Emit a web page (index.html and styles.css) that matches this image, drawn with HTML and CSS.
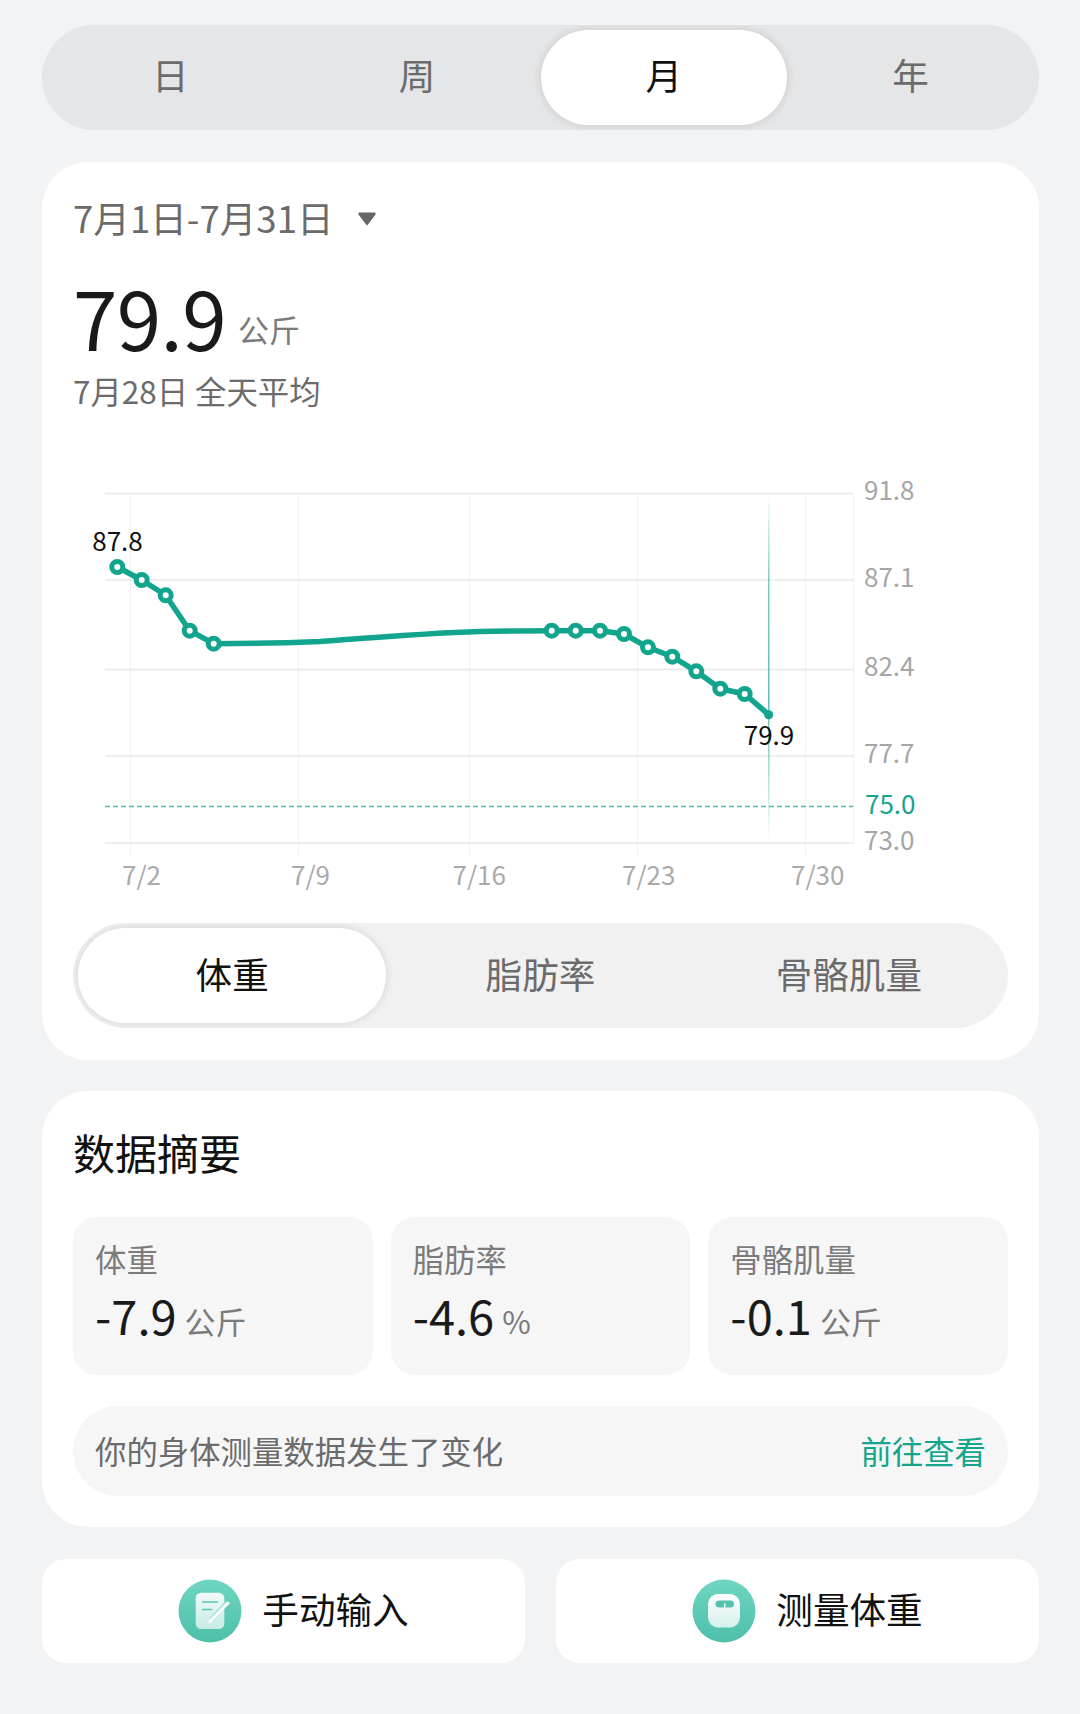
FILE: index.html
```html
<!DOCTYPE html>
<html lang="zh-CN">
<head>
<meta charset="utf-8">
<title>体重</title>
<link rel="stylesheet" href="styles.css">
</head>
<body>
<main class="page">
  <nav class="seg seg-top">
    <div class="tab">日</div>
    <div class="tab">周</div>
    <div class="tab active">月</div>
    <div class="tab">年</div>
  </nav>

  <section class="card card-chart">
    <div class="date-row">
      <span>7月1日-7月31日</span>
      <svg class="caret" viewBox="0 0 20 15" aria-hidden="true"><path d="M2.5 1.5h15a1.2 1.2 0 0 1 1 1.9l-7.500 10a1.200 1.200 0 0 1-2 0l-7.500-10a1.200 1.200 0 0 1 1-1.900z"/></svg>
    </div>
    <div class="reading">
      <span class="reading-value">79.9</span>
      <span class="reading-unit">公斤</span>
    </div>
    <div class="reading-sub">7月28日 全天平均</div>

    <svg class="chart" viewBox="73 470 935 435" aria-label="体重趋势图">
      <defs>
        <linearGradient id="hl" x1="0" y1="0" x2="0" y2="1">
          <stop offset="0" stop-color="#14a58c" stop-opacity="0"/>
          <stop offset=".25" stop-color="#14a58c" stop-opacity=".55"/>
          <stop offset=".6" stop-color="#14a58c" stop-opacity=".7"/>
          <stop offset="1" stop-color="#14a58c" stop-opacity="0"/>
        </linearGradient>
      </defs>
      <g class="grid-v">
        <line x1="130.500" y1="493" x2="130.500" y2="855"/>
        <line x1="298.500" y1="493" x2="298.500" y2="855"/>
        <line x1="469.500" y1="493" x2="469.500" y2="855"/>
        <line x1="637.500" y1="493" x2="637.500" y2="855"/>
        <line x1="805.500" y1="493" x2="805.500" y2="855"/>
        <line x1="853.500" y1="493" x2="853.500" y2="843"/>
      </g>
      <g class="grid-h">
        <line x1="105" y1="493.500" x2="854" y2="493.500"/>
        <line x1="105" y1="580" x2="854" y2="580"/>
        <line x1="105" y1="669.500" x2="854" y2="669.500"/>
        <line x1="105" y1="756" x2="854" y2="756"/>
        <line x1="105" y1="843" x2="854" y2="843"/>
      </g>
      <line class="target" x1="105" y1="806.500" x2="853" y2="806.500"/>
      <rect class="highlight" x="768" y="493" width="1.500" height="350" fill="url(#hl)"/>
      <path class="trend" d="M117.300 567L141.700 580L165.700 595.300L189.700 630.700L213.700 643.700C250 643.700 270 643.500 320 641.500C380 637 430 633 480 631.500C510 630.700 530 630.700 551.700 630.700L575.700 630.700L600 630.700L624 634L648 647.300L672.300 656.700L696.300 671.300L720.300 688.700L744.700 694L768.700 714.700"/>
      <g class="dots">
        <circle cx="117.300" cy="567" r="5.500"/>
        <circle cx="141.700" cy="580" r="5.500"/>
        <circle cx="165.700" cy="595.300" r="5.500"/>
        <circle cx="189.700" cy="630.700" r="5.500"/>
        <circle cx="213.700" cy="643.700" r="5.500"/>
        <circle cx="551.700" cy="630.700" r="5.500"/>
        <circle cx="575.700" cy="630.700" r="5.500"/>
        <circle cx="600" cy="630.700" r="5.500"/>
        <circle cx="624" cy="634" r="5.500"/>
        <circle cx="648" cy="647.300" r="5.500"/>
        <circle cx="672.300" cy="656.700" r="5.500"/>
        <circle cx="696.300" cy="671.300" r="5.500"/>
        <circle cx="720.300" cy="688.700" r="5.500"/>
        <circle cx="744.700" cy="694" r="5.500"/>
      </g>
      <circle class="dot-end" cx="768.700" cy="714.700" r="4.500"/>
      <text class="peak" x="117.500" y="550.500">87.8</text>
      <text class="peak" x="769" y="745">79.9</text>
      <g class="axis-y">
        <text x="864" y="500">91.8</text>
        <text x="864" y="587">87.1</text>
        <text x="864" y="676">82.4</text>
        <text x="864" y="763">77.7</text>
        <text class="axis-target" x="865" y="814">75.0</text>
        <text x="864" y="850">73.0</text>
      </g>
      <g class="axis-x">
        <text x="122" y="885">7/2</text>
        <text x="291" y="885">7/9</text>
        <text x="452.500" y="885">7/16</text>
        <text x="622" y="885">7/23</text>
        <text x="791" y="885">7/30</text>
      </g>
    </svg>

    <nav class="seg seg-metric">
      <div class="tab active">体重</div>
      <div class="tab">脂肪率</div>
      <div class="tab">骨骼肌量</div>
    </nav>
  </section>

  <section class="card card-summary">
    <h2 class="summary-title">数据摘要</h2>
    <div class="tiles">
      <div class="tile">
        <div class="tile-label">体重</div>
        <div class="tile-row"><span class="tile-value">-7.9</span><span class="tile-unit">公斤</span></div>
      </div>
      <div class="tile">
        <div class="tile-label">脂肪率</div>
        <div class="tile-row"><span class="tile-value">-4.6</span><span class="tile-unit">%</span></div>
      </div>
      <div class="tile">
        <div class="tile-label">骨骼肌量</div>
        <div class="tile-row"><span class="tile-value">-0.1</span><span class="tile-unit">公斤</span></div>
      </div>
    </div>
    <div class="notice">
      <span>你的身体测量数据发生了变化</span>
      <span class="notice-link">前往查看</span>
    </div>
  </section>

  <div class="actions">
    <div class="action">
      <svg class="action-icon" viewBox="0 0 64 64" aria-hidden="true">
        <defs>
          <linearGradient id="disc" x1="0" y1="0" x2="0" y2="1">
            <stop offset="0" stop-color="#6fd6c1"/>
            <stop offset="1" stop-color="#4dbfa9"/>
          </linearGradient>
          <linearGradient id="sheet" x1="0" y1="0" x2="0" y2="1">
            <stop offset="0" stop-color="#f2faf8"/>
            <stop offset="1" stop-color="#c6ebe3"/>
          </linearGradient>
          <linearGradient id="body" x1="0" y1="0" x2="0" y2="1">
            <stop offset="0" stop-color="#ffffff"/>
            <stop offset="1" stop-color="#d4f0ea"/>
          </linearGradient>
        </defs>
        <circle cx="32" cy="32" r="31.500" fill="url(#disc)"/>
        <rect x="17.700" y="13.700" width="28.600" height="36.300" rx="5.500" fill="url(#sheet)"/>
        <path d="M24 23h16M24 30.500h10" stroke="#5cc5b0" stroke-width="1.500" fill="none"/>
        <path d="M49 23.500L33 41" stroke="#a5e0d3" stroke-width="4.500" fill="none"/>
        <path d="M50 24L32 42.500" stroke="#ffffff" stroke-width="3" stroke-linecap="round" fill="none"/>
      </svg>
      <span>手动输入</span>
    </div>
    <div class="action">
      <svg class="action-icon" viewBox="0 0 64 64" aria-hidden="true">
        <circle cx="32" cy="32" r="31.500" fill="url(#disc)"/>
        <rect x="16" y="15" width="32" height="33.500" rx="10" fill="url(#body)"/>
        <rect x="23.500" y="21.500" width="18.500" height="7" rx="3.500" fill="#54c3ad"/>
        <rect x="32" y="24.500" width="1.500" height="5" fill="#ffffff"/>
      </svg>
      <span>测量体重</span>
    </div>
  </div>
</main>
</body>
</html>
```

FILE: styles.css
```css
* { box-sizing: border-box; }

html, body { margin: 0; padding: 0; }

body {
  background: #f1f3f5;
  font-family: "Noto Sans CJK SC", "Noto Sans", sans-serif;
  color: #111;
}

.page {
  width: 1080px;
  height: 1714px;
  padding: 25px 41px 0 42px;
  display: flex;
  flex-direction: column;
  overflow: hidden;
}

.seg {
  display: flex;
  height: 105px;
  padding: 5px;
  border-radius: 53px;
  overflow: hidden;
}

.seg-top { background: #e5e6e8; }

.seg-metric { background: #f1f1f2; flex: none; }

.tab {
  flex: 1 1 0;
  display: flex;
  align-items: center;
  justify-content: center;
  font-size: 36.600px;
  line-height: 44px;
  padding-bottom: 6px;
  color: #6b6b6b;
  border-radius: 48px;
}

.seg-metric .tab { padding-bottom: 4px; }

.tab.active {
  background: #fff;
  color: #111;
  box-shadow: 0 0 10px rgba(0, 0, 0, .13);
}

.card {
  background: #fff;
  border-radius: 46px;
  padding-left: 31px;
  padding-right: 31px;
}

.card-chart {
  margin-top: 32px;
  height: 898px;
  padding-top: 34px;
}

.date-row {
  display: flex;
  align-items: center;
  height: 44px;
  font-size: 36.600px;
  line-height: 44px;
  color: #6b6b6b;
}

.caret {
  width: 20px;
  height: 15px;
  margin-left: 23px;
  fill: #666;
}

.reading {
  display: flex;
  align-items: flex-end;
  margin-top: 36px;
  height: 80px;
}

.reading-value {
  font-size: 80px;
  line-height: 80px;
  letter-spacing: -.6px;
  color: #1a1a1a;
}

.reading-unit {
  font-size: 31px;
  line-height: 30px;
  color: #7b7b7b;
  margin: 0 0 12px 12px;
}

.reading-sub {
  margin-top: 13px;
  font-size: 31.400px;
  line-height: 44px;
  color: #6b6b6b;
}

.chart {
  display: block;
  width: 935px;
  height: 435px;
  margin-top: 57px;
  margin-bottom: 18px;
}

.chart text { font-size: 26px; }

.grid-v line { stroke: #ececec; stroke-width: 1; stroke-dasharray: 2 1; }

.grid-h line { stroke: #e8e8e8; stroke-width: 1.500; }

.target {
  stroke: #4dbba7;
  stroke-width: 1.500;
  stroke-dasharray: 5 3;
}

.trend {
  fill: none;
  stroke: #12a58e;
  stroke-width: 5.500;
  stroke-linejoin: round;
}

.dots circle {
  fill: #fff;
  stroke: #12a58e;
  stroke-width: 5;
}

.dot-end { fill: #12a58e; }

.peak { fill: #111; text-anchor: middle; }

.axis-y text { fill: #a6a6a6; }

.axis-y .axis-target { fill: #14a58c; }

.axis-x text { fill: #aaa; }

.card-summary {
  margin-top: 31px;
  height: 436px;
  padding-top: 34px;
}

.summary-title {
  margin: 0;
  font-size: 42px;
  font-weight: 400;
  line-height: 54px;
  color: #111;
}

.tiles {
  display: grid;
  grid-template-columns: repeat(3, 1fr);
  gap: 18px;
  margin-top: 38px;
}

.tile {
  height: 158px;
  padding: 22px 22px 0;
  background: #f6f6f7;
  border-radius: 24px;
}

.tile-label {
  font-size: 31.400px;
  line-height: 40px;
  color: #7b7b7b;
}

.tile-row {
  display: flex;
  align-items: flex-end;
  margin-top: 11px;
  height: 50px;
}

.tile-value {
  font-size: 47px;
  line-height: 50px;
  color: #1a1a1a;
}

.tile-unit {
  font-size: 31px;
  line-height: 30px;
  color: #7b7b7b;
  margin: 0 0 4px 8px;
}

.notice {
  display: flex;
  align-items: center;
  justify-content: space-between;
  height: 90px;
  margin-top: 31px;
  padding: 0 22px;
  background: #f6f6f7;
  border-radius: 45px;
  font-size: 31.400px;
  line-height: 44px;
  color: #6b6b6b;
}

.notice-link { color: #14a58c; }

.actions {
  display: grid;
  grid-template-columns: 483px 483px;
  gap: 31px;
  margin-top: 32px;
}

.action {
  height: 104px;
  background: #fff;
  border-radius: 24px;
  padding: 0 0 4px 20px;
  display: flex;
  align-items: center;
  justify-content: center;
  gap: 20px;
  font-size: 36.600px;
  line-height: 44px;
  color: #111;
}

.action-icon {
  width: 64px;
  height: 64px;
  flex: none;
  margin-top: 4px;
}
```
